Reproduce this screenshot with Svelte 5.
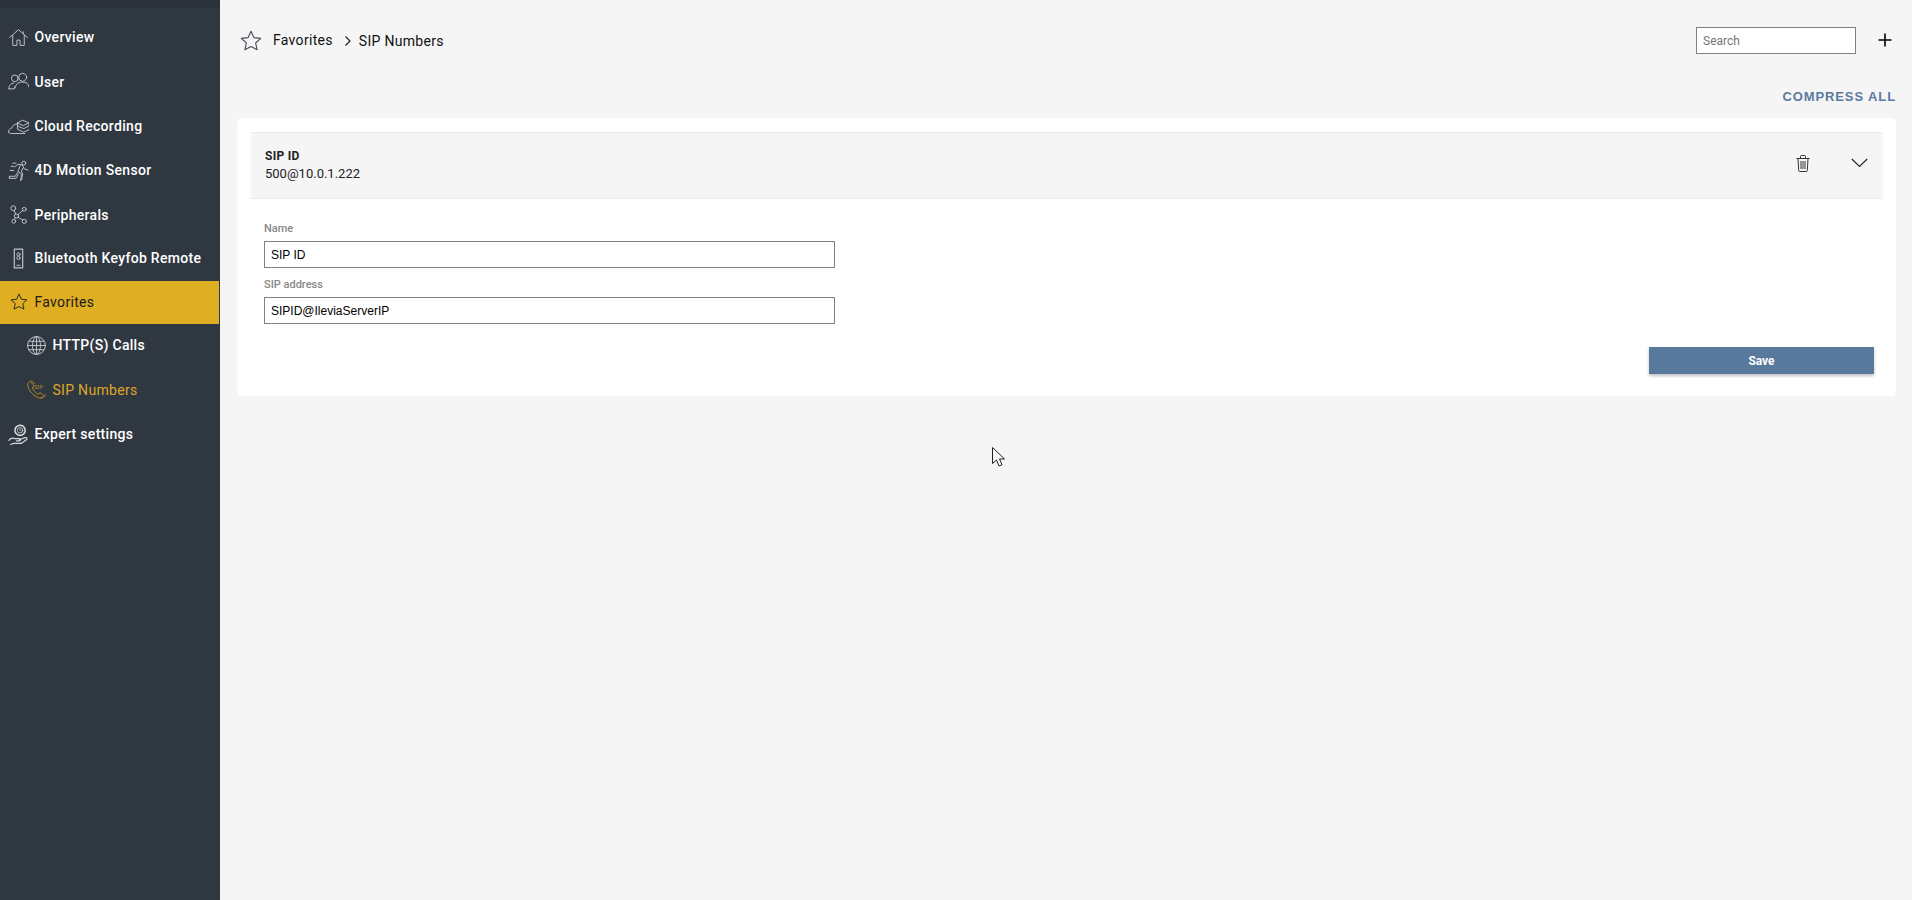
<script lang="ts">
	const menu = [
		{ id: 'overview', label: 'Overview', h: 44, pb: 0 },
		{ id: 'user', label: 'User', h: 45, pb: 0 },
		{ id: 'cloud', label: 'Cloud Recording', h: 44, pb: 0 },
		{ id: 'motion', label: '4D Motion Sensor', h: 44, pb: 0 },
		{ id: 'peripherals', label: 'Peripherals', h: 45, pb: 0 },
		{ id: 'keyfob', label: 'Bluetooth Keyfob Remote', h: 44, pb: 2 }
	];
</script>

{#snippet star(size)}
	<svg width={size} height={size} viewBox="0 0 20 20" fill="none" stroke="currentColor" stroke-width="1" stroke-linejoin="round">
		<path d="M10 1.200l2.600 5.700 6.200.7-4.600 4.200 1.300 6.100L10 15.100l-5.500 2.800 1.300-6.100-4.600-4.200 6.200-.7z" />
	</svg>
{/snippet}

{#snippet icon(id)}
	<svg width="21" height="21" viewBox="0 0 20 20" fill="none" stroke="#c4c7cb" stroke-width="0.9" stroke-linejoin="round" stroke-linecap="round">
		{#if id === 'overview'}
			<path d="M1.500 10L10 2.500 18.500 10M4.500 8v9.500h4v-5h3v5h4V8M14.500 4.500v2" />
		{:else if id === 'user'}
			<circle cx="6.500" cy="7" r="3.200" />
			<circle cx="14" cy="6" r="3.800" />
			<path d="M7 15.500c.5-3.500 3.500-5 7-5s5.500 1.500 5.800 4.500M.8 17c0-3.500 2.200-5.500 4.700-5.500M.8 17h5.500v-2" />
		{:else if id === 'cloud'}
			<path d="M.6 15.500c-.3-2 1-3.500 3-4 .8-2.500 3-4 5.400-4M.6 15.500c.4.800 1.200 1.200 2.400 1.200h13" />
			<path d="M9 6.500l5-2.500 6 2.500-5 2.500zM9 6.500v3l6 2.500 5-2.500v-3M9 9.500v3l6 3 5-2.500" />
		{:else if id === 'motion'}
			<circle cx="15" cy="3" r="1.900" />
			<path d="M6.500 6.500l3-2.500 4 .7 2 3.800 3.500 1M11.500 5.500l-2 5.500 3.500 2.500-1 6M14 8l-1.500 3.500 1.500 1-1 6.500M9 12l-2 3.500H1.500M1.500 15.500l-.5 2h6.500l2.500-4" />
			<path d="M4.500 3h3M3 6h2.500M2 10h3.500" />
		{:else if id === 'peripherals'}
			<circle cx="5" cy="4" r="2.300" />
			<circle cx="15.500" cy="5" r="1.800" />
			<circle cx="8" cy="11.500" r="2" />
			<circle cx="5.500" cy="16.500" r="1.800" />
			<circle cx="15.500" cy="16.500" r="2" />
			<path d="M6 6l1.200 3.700M14 6.200l-4.500 4M7 13.300l-1 1.500M9.700 12.700l4.300 2.500" />
		{:else if id === 'keyfob'}
			<rect x="6" y="1" width="8" height="18" stroke-width="1.100" />
			<circle cx="10" cy="6" r="1.500" />
			<circle cx="10" cy="9.500" r="1.500" />
			<path d="M8.500 16.500h3" />
		{:else if id === 'http'}
			<circle cx="10" cy="10" r="8.500" />
			<ellipse cx="10" cy="10" rx="3.800" ry="8.500" />
			<path d="M10 1.500v17M1.500 10h17M2.800 6h14.400M2.800 14h14.400" />
		{:else if id === 'sip'}
			<path stroke="#b58a22" d="M3.500 2.500L1.500 4.500c0 6 6 13 13 14l2.500-2.500-3.500-3-2 1.500c-2-1-4.500-3.500-5.500-6l1.500-2z" />
			<path stroke="#b58a22" d="M5 1.500l3 3M14 18c2 0 4-1 4.500-3" />
		{:else if id === 'expert'}
			<circle cx="11.500" cy="6" r="4.800" stroke="#d8dadc" stroke-dasharray="2 .7" stroke-width="1.500" />
			<circle cx="11.500" cy="6" r="2.600" />
			<path d="M11.500 4.800V6l1 .7" />
			<path stroke="#d8dadc" stroke-width="1.100" d="M.8 15.500c2-2.500 4-2.500 6-1.500h4c1.500 0 1.500 2 0 2H8M11 15l5-2c2-.5 2.700 1 1.500 2l-5 3.500H5L2.500 19.500" />
		{/if}
	</svg>
{/snippet}

<div class="page">
	<aside class="sidebar">
		<div class="topline"></div>
		<nav class="menu">
			{#each menu as item (item.id)}
				<div class="item" style="height: {item.h}px; padding-bottom: {item.pb}px">
					<span class="ico">{@render icon(item.id)}</span>
					<span>{item.label}</span>
				</div>
			{/each}
			<div class="item active">
				<span class="ico">{@render star(18)}</span>
				<span>Favorites</span>
			</div>
			<div class="item sub first">
				<span class="ico">{@render icon('http')}</span>
				<span>HTTP(S) Calls</span>
			</div>
			<div class="item sub current">
				<span class="ico sip-ico">
					{@render icon('sip')}
					<span class="sip-tag">SIP</span>
				</span>
				<span>SIP Numbers</span>
			</div>
			<div class="item">
				<span class="ico">{@render icon('expert')}</span>
				<span>Expert settings</span>
			</div>
		</nav>
	</aside>

	<main class="content">
		<header class="topbar">
			<div class="crumbs">
				<span class="crumb-star">{@render star(22)}</span>
				<span class="crumb-first">Favorites</span>
				<svg class="crumb-sep" width="8" height="12" viewBox="0 0 8 12" fill="none" stroke="#222" stroke-width="1.200">
					<path d="M1.500 1.500L6 6l-4.500 4.500" />
				</svg>
				<span class="crumb-last">SIP Numbers</span>
			</div>
			<div class="tools">
				<input class="search" type="text" placeholder="Search" />
				<svg class="plus" width="14" height="14" viewBox="0 0 14 14" stroke="#000" stroke-width="1.600">
					<path d="M7 .5v13M.5 7h13" />
				</svg>
			</div>
		</header>

		<div class="compress">COMPRESS ALL</div>

		<section class="card">
			<div class="row-head">
				<div class="row-title">
					<div class="title">SIP ID</div>
					<div class="value">500@10.0.1.222</div>
				</div>
				<div class="row-actions">
					<svg class="trash" width="14" height="17" viewBox="0 0 14 17" fill="none" stroke="#333" stroke-width="1">
						<path d="M.5 3.500h13M4.500 3.500V1.500q0-1 1-1h3q1 0 1 1v2M2 3.500l.7 12q0 1 1 1h6.600q1 0 1-1l.7-12" />
						<path d="M5 6v8M7 6v8M9 6v8" />
					</svg>
					<svg class="chev" width="17" height="10" viewBox="0 0 17 10" fill="none" stroke="#222" stroke-width="1.100">
						<path d="M.8 1l7.700 7.500L16.200 1" />
					</svg>
				</div>
			</div>
			<form class="form">
				<label class="field">
					<span class="lbl">Name</span>
					<input type="text" value="SIP ID" />
				</label>
				<label class="field">
					<span class="lbl">SIP address</span>
					<input type="text" value="SIPID@IleviaServerIP" />
				</label>
				<div class="actions">
					<button type="button" class="save">Save</button>
				</div>
			</form>
		</section>
	</main>

	<svg class="cursor" width="13" height="21" viewBox="0 0 13 21" stroke="#1d2026" stroke-width="1" fill="#f8f8f8">
		<path d="M.5.500v16l4-3.500 2.500 6 3-1.300-2.500-5.700h5z" />
	</svg>
</div>

<style>
	:global(body) {
		margin: 0;
		background: #f5f5f5;
		font-family: Roboto, 'Liberation Sans', sans-serif;
	}

	.page {
		position: relative;
		display: flex;
		height: 900px;
		overflow: hidden;
	}

	.sidebar {
		width: 220px;
		flex: none;
		background: #2f3741;
		color: #fff;
	}
	.topline {
		height: 8px;
		background: #2c333d;
		margin-bottom: 7px;
	}
	.menu {
		display: flex;
		flex-direction: column;
	}
	.item {
		display: flex;
		align-items: center;
		height: 44px;
		box-sizing: border-box;
		padding-left: 8px;
		font-size: 14px;
		font-weight: 500;
		letter-spacing: 0.3px;
	}
	.ico {
		display: flex;
		justify-content: center;
		width: 21px;
		margin-right: 5.500px;
		flex: none;
	}
	.item.active {
		width: 219px;
		height: 43px;
		padding-bottom: 1px;
		background: #dfae23;
		font-weight: 400;
		color: #1c1c1c;
	}
	.item.sub {
		padding-left: 26px;
	}
	.item.first {
		height: 43px;
		padding-bottom: 1px;
	}
	.item.current {
		height: 45px;
		color: #dfa726;
		font-weight: 400;
	}
	.sip-ico {
		position: relative;
	}
	.sip-tag {
		position: absolute;
		left: 8px;
		top: 4px;
		font-size: 6px;
		color: #b58a22;
		letter-spacing: 0;
	}

	.content {
		flex: 1;
		min-width: 0;
		padding: 0 16px 0 17px;
	}
	.topbar {
		display: flex;
		justify-content: space-between;
		align-items: center;
		height: 81px;
	}
	.crumbs {
		display: flex;
		align-items: center;
		font-size: 14px;
		letter-spacing: 0.3px;
		color: #111;
		padding-left: 3px;
	}
	.crumb-star {
		display: flex;
		color: #444b55;
		margin-right: 11px;
	}
	.crumb-first {
		margin-right: 11px;
		position: relative;
		top: -1px;
	}
	.crumb-sep {
		margin-right: 7px;
	}
	.tools {
		display: flex;
		align-items: center;
		gap: 22px;
		padding-right: 4px;
	}
	.search {
		width: 160px;
		height: 27px;
		box-sizing: border-box;
		border: 1px solid #808080;
		background: #fff;
		padding: 0 6px;
		font-family: Roboto, sans-serif;
		font-size: 12px;
		border-radius: 0;
		outline: none;
	}
	.search::placeholder {
		color: #777;
	}
	.plus {
		position: relative;
		top: -1px;
	}

	.compress {
		text-align: right;
		font-family: 'Liberation Sans', Arial, sans-serif;
		font-size: 13px;
		font-weight: 700;
		letter-spacing: 0.9px;
		color: #5a7aa0;
		line-height: 15px;
		margin-top: 8px;
		margin-bottom: 14px;
	}

	.card {
		background: #fff;
		border-radius: 5px;
		padding: 14px 13px 22px 14px;
	}
	.row-head {
		display: flex;
		justify-content: space-between;
		align-items: center;
		height: 67px;
		box-sizing: border-box;
		background: #f5f5f5;
		border-top: 1px solid #ececec;
		border-bottom: 1px solid #ececec;
		padding: 0 15px 0 14px;
	}
	.title {
		font-size: 12px;
		font-weight: 700;
		letter-spacing: 0.3px;
		color: #222;
		line-height: 17px;
	}
	.value {
		font-size: 13px;
		color: #222;
		line-height: 18px;
	}
	.row-actions {
		display: flex;
		align-items: center;
		gap: 41px;
		padding-bottom: 5px;
	}

	.form {
		padding: 20px 13px 0;
	}
	.field {
		display: flex;
		flex-direction: column;
		width: 571px;
		margin-bottom: 7px;
	}
	.lbl {
		font-size: 11px;
		font-weight: 500;
		color: #888;
		line-height: 19px;
		margin-bottom: 3px;
	}
	.field input {
		height: 27px;
		box-sizing: border-box;
		border: 1px solid #808080;
		background: #fff;
		padding: 0 6px;
		font-family: 'Liberation Sans', Arial, sans-serif;
		font-size: 12px;
		color: #000;
		border-radius: 0;
		outline: none;
	}
	.actions {
		display: flex;
		justify-content: flex-end;
		margin-top: 23px;
		margin-right: -4px;
	}
	.save {
		width: 225px;
		height: 27px;
		border: 0;
		background: #58789c;
		color: #fff;
		font-family: Roboto, sans-serif;
		font-size: 12px;
		font-weight: 700;
		box-shadow: 0 2px 3px rgba(0, 0, 0, 0.25);
	}

	/* mouse pointer caught in the capture */
	.cursor {
		position: absolute;
		left: 992px;
		top: 447px;
	}
</style>
